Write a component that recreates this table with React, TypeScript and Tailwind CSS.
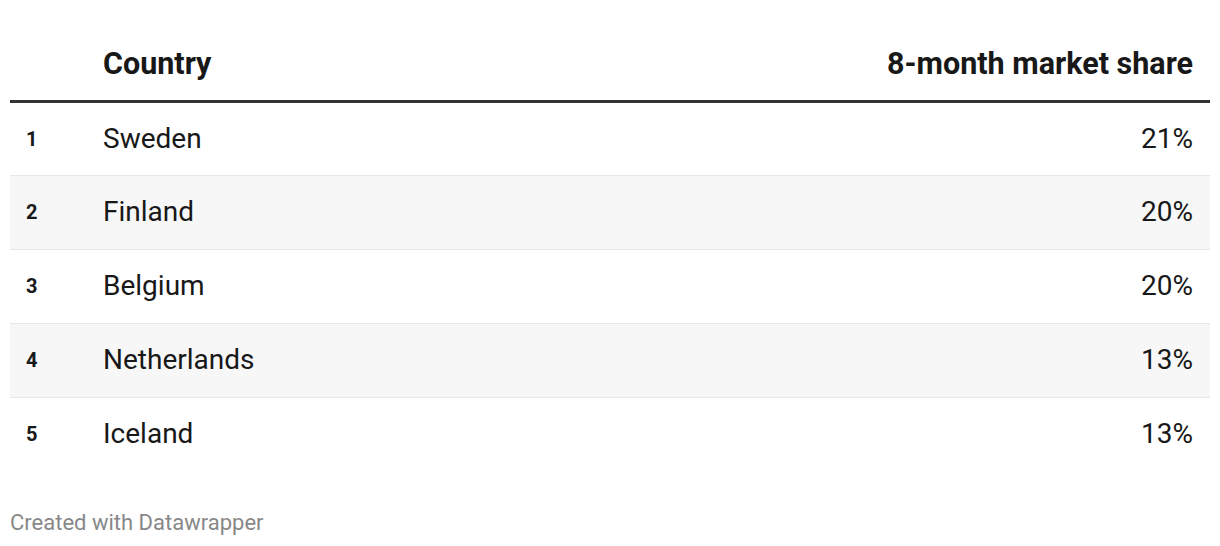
const rows = [
  { rank: 1, country: "Sweden", share: "21%" },
  { rank: 2, country: "Finland", share: "20%" },
  { rank: 3, country: "Belgium", share: "20%" },
  { rank: 4, country: "Netherlands", share: "13%" },
  { rank: 5, country: "Iceland", share: "13%" },
];

export default function App() {
  return (
    <div className="w-[1220px] h-[546px] bg-white px-[10px] text-[#181818] font-['Roboto',sans-serif]">
      <table className="w-full border-collapse">
        <thead>
          <tr className="h-[101px] border-b-[3px] border-[#333333]">
            <th className="w-[93px]" />
            <th className="text-left align-bottom pb-[20px] text-[30.5px] font-bold leading-none">Country</th>
            <th className="text-right align-bottom pb-[20px] pr-[17px] text-[30.5px] font-bold leading-none">
              8-month market share
            </th>
          </tr>
        </thead>
        <tbody>
          {rows.map((r, i) => (
            <tr
              key={r.rank}
              className={`h-[74px] ${i < rows.length - 1 ? "border-b border-[#e6e6e6]" : ""} ${
                i % 2 === 1 ? "bg-[#f7f7f7]" : ""
              }`}
            >
              <td className="pl-[16px] text-[20px] font-bold">{r.rank}</td>
              <td className="text-[28px]">{r.country}</td>
              <td className="text-right pr-[17px] text-[28px]">{r.share}</td>
            </tr>
          ))}
        </tbody>
      </table>
      <div className="mt-[35px] text-[22px] text-[#888888]">Created with Datawrapper</div>
    </div>
  );
}
